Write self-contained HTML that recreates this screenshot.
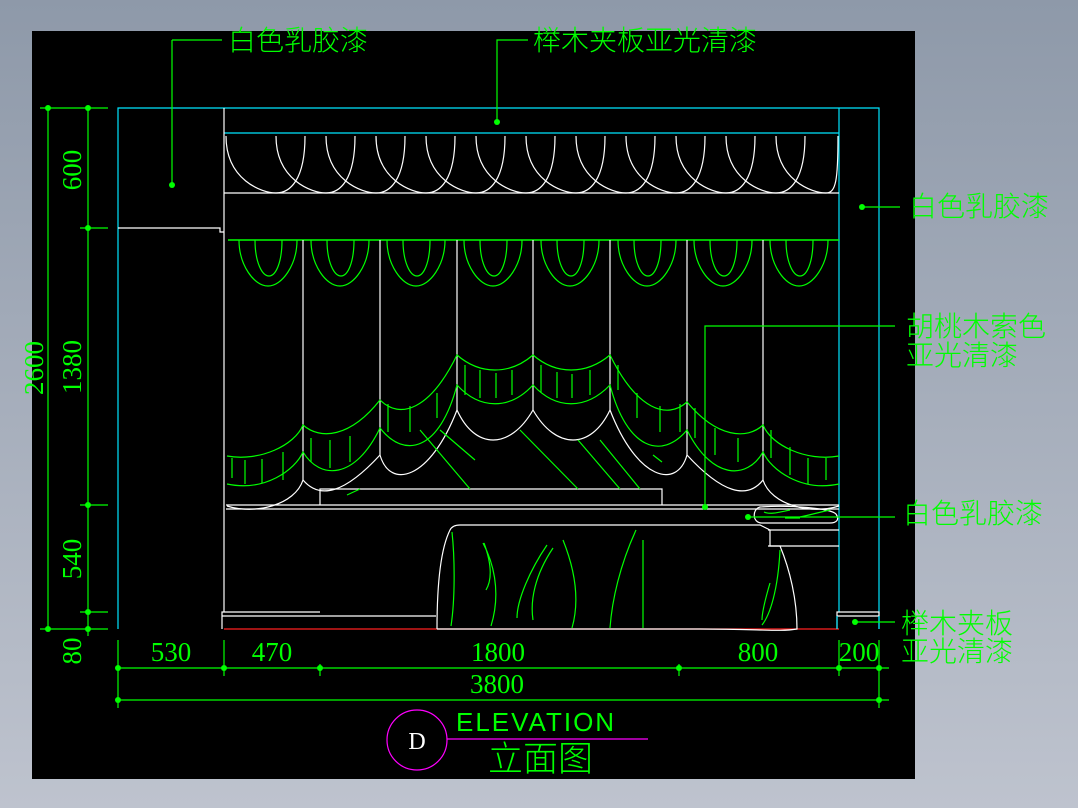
<!DOCTYPE html>
<html><head><meta charset="utf-8"><style>
html,body{margin:0;padding:0;width:1078px;height:808px;overflow:hidden;background:linear-gradient(#8e99a9,#bec3ce);}
svg{position:absolute;left:0;top:0}
text{font-family:"Liberation Serif","Noto Sans CJK SC",serif;fill:#00ff00}
.c{font-family:"Liberation Sans","Noto Sans CJK SC",sans-serif;font-size:28px;font-weight:300}
</style></head><body>
<svg width="1078" height="808" viewBox="0 0 1078 808" xmlns="http://www.w3.org/2000/svg">
<rect x="32" y="31" width="883" height="748" fill="#000"/>
<g fill="none" stroke-width="1.2">
<path d="M118 629V108H879V629" stroke="#00e5ff"/>
<path d="M839 108V612" stroke="#00e5ff"/>
<path d="M224 133H839" stroke="#00e5ff"/>
<path d="M224 108V612M224 193H839M118 228H220V232H224" stroke="#fff"/>
<path d="M228 240H839" stroke="#00ff00" stroke-width="1.5"/>
<path d="M224 629H839" stroke="#ff2020"/>
<path d="M222 629V612H320M222 616H436M837 629V612H879V616H837" stroke="#fff"/>
<path d="M837 616V629M879 616V629" stroke="#00e5ff"/>
<path stroke="#fff" d="
M226 136C226 180 262 193 276 193C290 193 305 180 305 136
M276 136C276 180 312 193 326 193C340 193 355 180 355 136
M326 136C326 180 362 193 376 193C390 193 405 180 405 136
M376 136C376 180 412 193 426 193C440 193 455 180 455 136
M426 136C426 180 462 193 476 193C490 193 505 180 505 136
M476 136C476 180 512 193 526 193C540 193 555 180 555 136
M526 136C526 180 562 193 576 193C590 193 605 180 605 136
M576 136C576 180 612 193 626 193C640 193 655 180 655 136
M626 136C626 180 662 193 676 193C690 193 705 180 705 136
M676 136C676 180 712 193 726 193C740 193 755 180 755 136
M726 136C726 180 762 193 776 193C790 193 805 180 805 136
M776 136C776 180 812 193 826 193C836 193 838 180 838 136"/>
<path stroke="#fff" d="M303 240V480M380 240V455M457 240V410M533 240V410M610 240V410M687 240V455M763 240V480"/>
<g stroke="#00ff00">
<path d="M239 240C239 265 254 286 268 286C282 286 297 265 297 240M255 240C255 262 262 276 269 276C276 276 282 262 282 240"/>
<path d="M311 240C311 265 326 286 340 286C354 286 369 265 369 240M327 240C327 262 334 276 341 276C348 276 354 262 354 240"/>
<path d="M387 240C387 265 402 286 416 286C430 286 445 265 445 240M403 240C403 262 410 276 417 276C424 276 430 262 430 240"/>
<path d="M464 240C464 265 479 286 493 286C507 286 522 265 522 240M480 240C480 262 487 276 494 276C501 276 507 262 507 240"/>
<path d="M541 240C541 265 556 286 570 286C584 286 599 265 599 240M557 240C557 262 564 276 571 276C578 276 584 262 584 240"/>
<path d="M618 240C618 265 633 286 647 286C661 286 676 265 676 240M634 240C634 262 641 276 648 276C655 276 661 262 661 240"/>
<path d="M694 240C694 265 709 286 723 286C737 286 752 265 752 240M710 240C710 262 717 276 724 276C731 276 737 262 737 240"/>
<path d="M770 240C770 265 785 286 799 286C813 286 828 265 828 240M786 240C786 262 793 276 800 276C807 276 813 262 813 240"/>
<path d="M227 456C260 462 295 445 303 425C320 440 350 438 380 400C400 420 430 410 457 355C480 375 510 375 533 355C556 375 586 375 610 355C637 410 667 420 687 402C717 438 747 440 763 425C771 445 806 462 839 456"/>
<path d="M227 484C265 492 295 470 303 452C320 480 355 480 380 428C405 460 440 450 457 385C480 410 510 410 533 385C556 410 586 410 610 385C627 450 662 460 687 430C712 480 747 480 763 452C771 470 801 492 839 484"/>
<path d="M232 458V478M245 460V484M262 459V483M283 452V480M311 438V462M330 440V468M350 436V462M388 404V432M410 406V432M437 393V418M465 365V395M480 370V398M496 373V398M512 370V395M541 365V393M557 372V398M572 374V398M590 370V395M618 365V390M637 393V418M660 406V432M680 404V432M695 408V438M715 428V455M738 438V462M771 430V458M790 447V475M808 458V484M826 458V480"/>
</g>
<path stroke="#fff" d="M227 506C255 515 295 505 303 480M303 480C320 500 345 493 380 455C390 490 430 480 457 410C475 450 510 450 533 410C556 450 591 450 610 410C637 480 677 490 687 455C722 493 747 500 763 480C771 505 811 515 839 506"/>
<path stroke="#fff" d="M320 489H662V505H320ZM226 505H839M226 509H839"/>
<path stroke="#00ff00" d="M347 495L360 489M420 430L470 489M440 430L475 460M520 430L578 489M578 440L620 489M600 440L640 489M653 455L662 462"/>
<path stroke="#fff" d="M437 629C437 590 440 550 450 530C452 526 456 525 460 525H760L770 530V546H780C790 570 797 600 797 629C780 632 760 629 700 629H437"/>
<path stroke="#fff" d="M768 530H839M768 546H839"/>
<path stroke="#fff" d="M760 507C790 505 830 508 836 514C840 520 836 523 830 523H762C752 523 752 509 760 507Z"/>
<path stroke="#00ff00" d="M452 532C455 560 455 600 451 626M483 543C492 560 502 590 491 626M484 543C492 565 492 580 486 590M547 545C530 570 517 600 517 618M553 548C535 575 530 600 533 620M563 540C575 570 580 600 572 628M636 530C620 565 612 600 610 628M643 540V628M780 550C778 590 770 615 762 625M770 583C765 600 762 612 762 620M764 512C770 515 780 512 790 510M800 517C810 515 820 512 830 510M785 518H800"/>
<g stroke="#00ff00">
<path d="M172 40H222M172 40V185M528 40H497V122M860 207H900M705 507V326H895M748 517H895M855 622H895"/>
<path d="M48 108V629M88 108V629M40 108H108M80 228H108M80 505H108M80 612H108M40 629H108M88 629V636"/>
<path d="M118 668H889M118 700H889M118 640V708M224 640V676M320 664V676M679 664V676M839 640V676M879 640V708"/>
</g>
<g fill="#00ff00">
<circle cx="172" cy="185" r="3"/><circle cx="497" cy="122" r="3"/><circle cx="862" cy="207" r="3"/><circle cx="705" cy="507" r="3"/><circle cx="748" cy="517" r="3"/><circle cx="855" cy="622" r="3"/>
<circle cx="48" cy="108" r="3"/><circle cx="88" cy="108" r="3"/><circle cx="88" cy="228" r="3"/><circle cx="88" cy="505" r="3"/><circle cx="88" cy="612" r="3"/><circle cx="48" cy="629" r="3"/><circle cx="88" cy="629" r="3"/>
<circle cx="118" cy="668" r="3"/><circle cx="224" cy="668" r="3"/><circle cx="320" cy="668" r="3"/><circle cx="679" cy="668" r="3"/><circle cx="839" cy="668" r="3"/><circle cx="879" cy="668" r="3"/><circle cx="118" cy="700" r="3"/><circle cx="879" cy="700" r="3"/>
</g>
<circle cx="417" cy="740" r="30" stroke="#ff00ff"/>
<path d="M447 739H648" stroke="#ff00ff"/>
</g>
<g font-size="27">
<text x="81" y="170" transform="rotate(-90 81 170)" text-anchor="middle">600</text>
<text x="81" y="367" transform="rotate(-90 81 367)" text-anchor="middle">1380</text>
<text x="81" y="559" transform="rotate(-90 81 559)" text-anchor="middle">540</text>
<text x="81" y="651" transform="rotate(-90 81 651)" text-anchor="middle">80</text>
<text x="43" y="368" transform="rotate(-90 43 368)" text-anchor="middle">2600</text>
<text x="171" y="661" text-anchor="middle">530</text>
<text x="272" y="661" text-anchor="middle">470</text>
<text x="498" y="661" text-anchor="middle">1800</text>
<text x="758" y="661" text-anchor="middle">800</text>
<text x="859" y="661" text-anchor="middle">200</text>
<text x="497" y="693" text-anchor="middle">3800</text>
</g>
<text x="417" y="749" text-anchor="middle" font-size="24" style="fill:#fff">D</text>
<text x="456" y="731" font-size="26" style="font-family:'Liberation Sans',sans-serif;letter-spacing:2px;stroke:#000;stroke-width:0.9;paint-order:stroke">ELEVATION</text>
<text x="488" y="771" class="c" style="font-size:35px">立面图</text>
<text x="228" y="50" class="c">白色乳胶漆</text>
<text x="533" y="50" class="c">榉木夹板亚光清漆</text>
<text x="909" y="216" class="c">白色乳胶漆</text>
<text x="906" y="336" class="c">胡桃木索色</text>
<text x="906" y="365" class="c">亚光清漆</text>
<text x="903" y="523" class="c">白色乳胶漆</text>
<text x="901" y="633" class="c">榉木夹板</text>
<text x="901" y="661" class="c">亚光清漆</text>
</svg>
</body></html>
